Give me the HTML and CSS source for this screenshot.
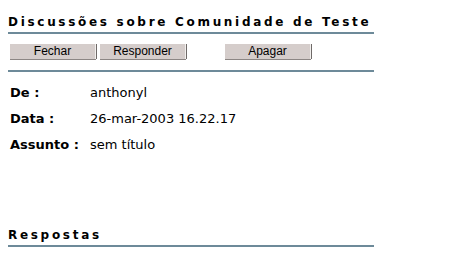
FILE: index.html
```html
<!DOCTYPE html>
<html lang="pt">
<head>
    <meta charset="UTF-8">
    <title>Discussões</title>
    <link rel="stylesheet" href="styles.css">
</head>
<body>
    <h1 class="section-title">Discussões sobre Comunidade de Teste</h1>

    <div class="toolbar">
        <button class="btn">Fechar</button>
        <button class="btn">Responder</button>
        <button class="btn btn-gap">Apagar</button>
    </div>

    <table class="details">
        <tr><th>De :</th><td>anthonyl</td></tr>
        <tr><th>Data :</th><td>26-mar-2003 16.22.17</td></tr>
        <tr><th>Assunto :</th><td>sem título</td></tr>
    </table>

    <h2 class="section-title replies">Respostas</h2>
</body>
</html>
```

FILE: styles.css
```css
body {
    margin: 8px;
    width: 366px;
    font-family: "DejaVu Sans", Verdana, sans-serif;
    color: #000;
    background: #fff;
}
.section-title {
    margin: 0;
    padding: 7px 0 3px 0;
    font-size: 12px;
    font-weight: bold;
    letter-spacing: 2.7px;
    line-height: 14px;
    white-space: nowrap;
    border-bottom: 2px solid #6d8a99;
}
.toolbar {
    display: flex;
    padding: 10px 0 0 2px;
    height: 26px;
    border-bottom: 2px solid #6d8a99;
}
.btn {
    width: 86px;
    height: 15px;
    margin-right: 4px;
    padding: 0;
    font-family: "Liberation Sans", Arial, sans-serif;
    font-size: 12px;
    line-height: 13px;
    color: #000;
    background: #d5cdcb;
    border: none;
    border-right: 1px solid #f2f0ee;
    box-shadow: 1px 0 0 #6f6a68, 0 1px 0 #8c8684;
}
.btn-gap {
    margin-left: 35px;
}
.details {
    margin-top: 8px;
    border-collapse: collapse;
    font-size: 13px;
}
.details th {
    text-align: left;
    font-weight: bold;
    padding: 3px 0 4px 2px;
    height: 19px;
    width: 80px;
}
.details td {
    padding: 3px 0 4px 0;
}
.replies {
    margin-top: 70px;
    padding-top: 0;
}
```
